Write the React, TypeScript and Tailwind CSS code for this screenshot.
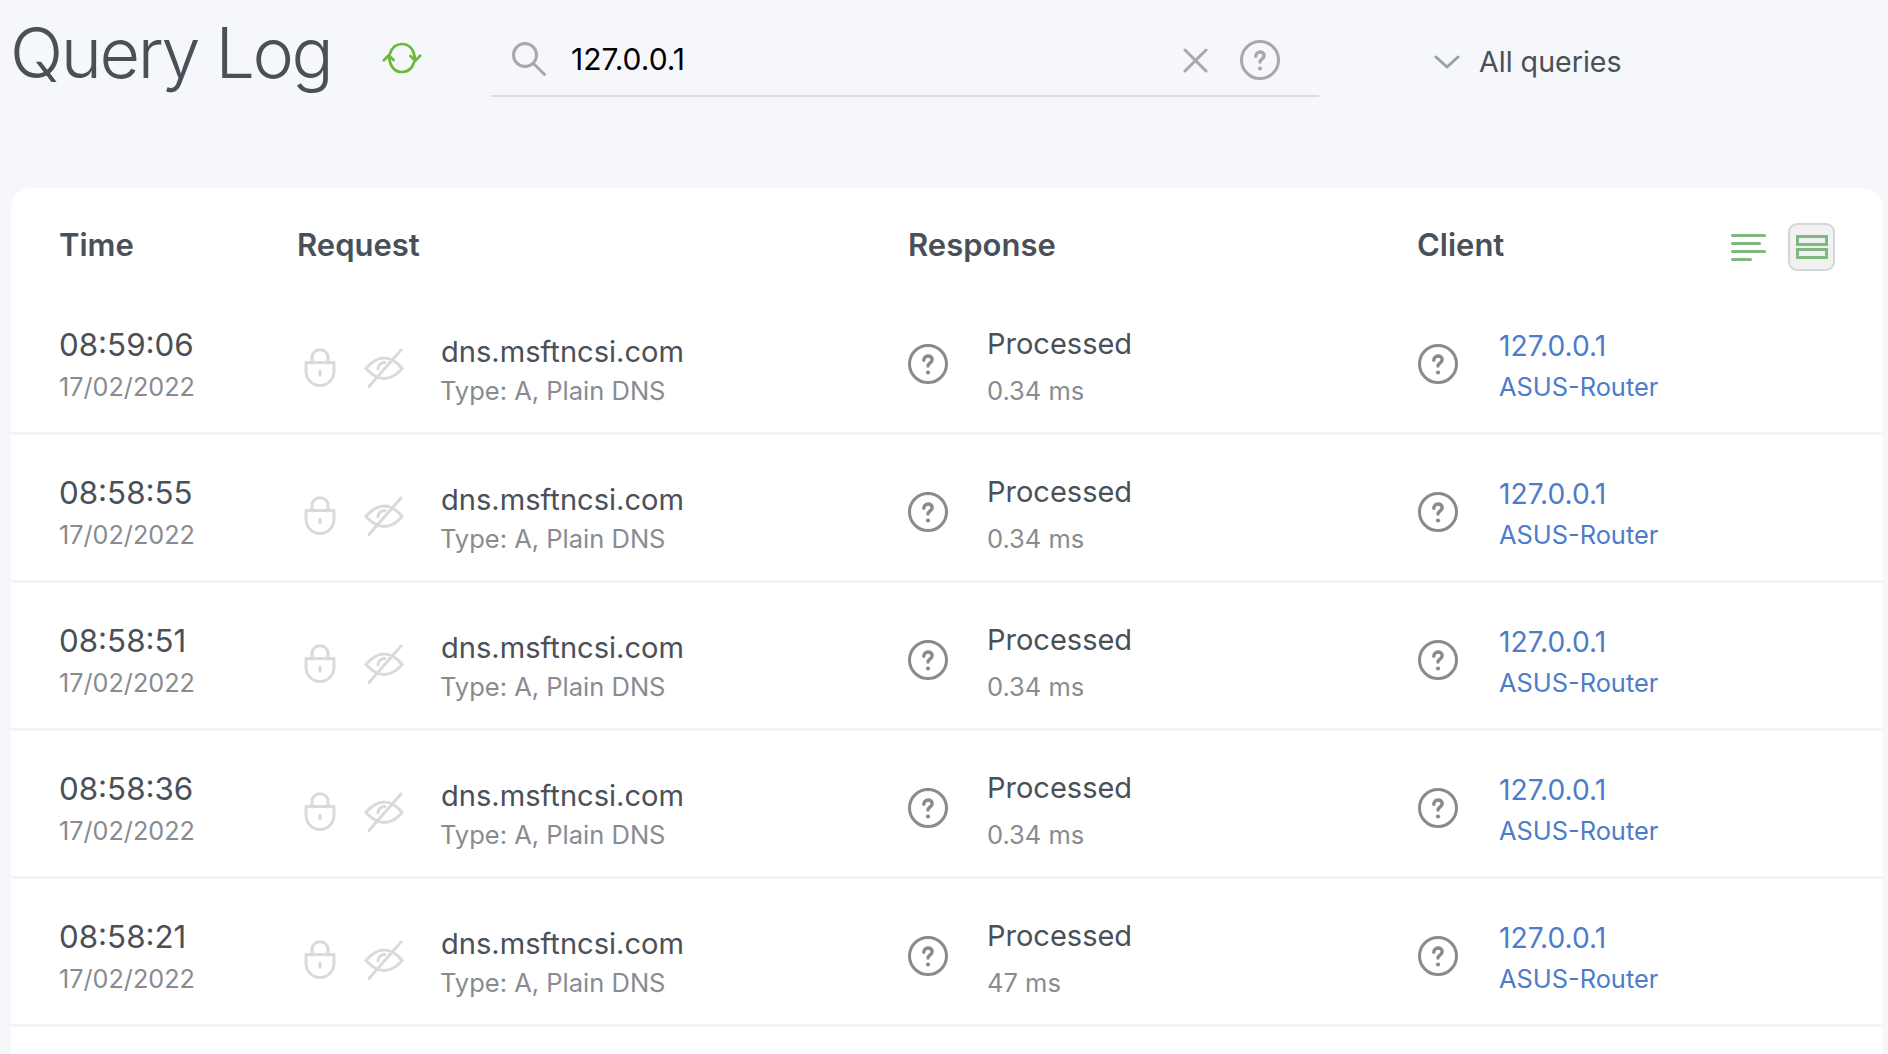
import React from "react";

const rows = [
  { time: "08:59:06", ms: "0.34 ms" },
  { time: "08:58:55", ms: "0.34 ms" },
  { time: "08:58:51", ms: "0.34 ms" },
  { time: "08:58:36", ms: "0.34 ms" },
  { time: "08:58:21", ms: "47 ms" },
];

function HelpIcon({ className }: { className?: string }) {
  return (
    <svg viewBox="0 0 40 40" fill="none" stroke="currentColor" strokeLinecap="round" strokeLinejoin="round" className={className}>
      <circle cx="20" cy="20" r="18.5" strokeWidth="3" />
      <path d="M15.800 16.200c0-2.500 1.900-4.200 4.300-4.200s4.100 1.500 4.100 3.700c0 3-4.200 3.200-4.200 6.300" strokeWidth="3.400" />
      <circle cx="20" cy="28.500" r="2.100" fill="currentColor" stroke="none" />
    </svg>
  );
}

function RefreshIcon() {
  return (
    <svg viewBox="0 0 40 32" fill="none" stroke="#6bb83a" strokeWidth="2.700" strokeLinecap="round" strokeLinejoin="round" className="w-[40px] h-[32px] shrink-0">
      <path d="M8 11.500C10 5.500 14.500 2 20 2c6.500 0 11.500 4.500 13 14.500" />
      <path d="M28.500 14l4.700 4.800 5-5" />
      <path d="M32 20.500C30 26.500 25.500 30 20 30c-6.500 0-11.500-4.500-13-14.500" />
      <path d="M11.500 18l-4.700-4.800-5 5" />
    </svg>
  );
}

function LockIcon() {
  return (
    <svg viewBox="0 0 32 39" fill="none" stroke="#dadada" strokeWidth="3" strokeLinecap="round" strokeLinejoin="round" className="w-[32px] h-[39px] shrink-0">
      <path d="M8 15V9.5C8 4.8 11.5 1.8 16 1.8s8 3 8 7.7V15" />
      <path d="M2 14.500h28V23c0 8-6 14.500-14 14.500S2 31 2 23z" />
      <path d="M16 23v4" />
    </svg>
  );
}

function EyeOffIcon() {
  return (
    <svg viewBox="0 0 40 40" fill="none" stroke="#dadada" strokeWidth="3" strokeLinecap="round" strokeLinejoin="round" className="w-[40px] h-[40px] shrink-0">
      <path d="M1.800 20.500C8 13.500 13.500 10 20 10c6.500 0 12.500 3.500 18.200 10.500C32.500 27 26.500 30.500 20 30.500c-6.500 0-12-3.500-18.200-10z" />
      <path d="M14 21a6.500 6.500 0 0 1 7-6.500" />
      <path d="M5 38.500L37 2" />
    </svg>
  );
}

function Row({ time, ms }: { time: string; ms: string }) {
  return (
    <div className="grid grid-cols-[237px_611px_509px_1fr] h-[148px] pl-[49px] border-b-[3px] border-[#f5f5f5]">
      <div className="pt-[37px] leading-[42px] -ml-[1px]">
        <div className="text-[31.300px] text-[#495057]">{time}</div>
        <div className="text-[25.200px] text-[#888c91]">17/02/2022</div>
      </div>
      <div className="flex">
        <div className="flex items-start gap-[28px] pl-[7px] pt-[61px] w-[144px]">
          <LockIcon />
          <EyeOffIcon />
        </div>
        <div className="pt-[45px] leading-[39px]">
          <div className="text-[29.100px] text-[#495057]">dns.msftncsi.com</div>
          <div className="text-[25.500px] text-[#888c91] -ml-[1px]">Type: A, Plain DNS</div>
        </div>
      </div>
      <div className="flex">
        <div className="w-[79px] pt-[57px]">
          <HelpIcon className="w-[40px] h-[40px] text-[#8a8a8a]" />
        </div>
        <div className="pt-[33px] leading-[48px]">
          <div className="text-[29px] text-[#495057]">Processed</div>
          <div className="text-[25.500px] text-[#888c91] -mt-[1px]">{ms}</div>
        </div>
      </div>
      <div className="flex">
        <div className="w-[82px] pl-[1px] pt-[57px]">
          <HelpIcon className="w-[40px] h-[40px] text-[#8a8a8a]" />
        </div>
        <div className="pt-[39px] leading-[41px] text-[#4d7cc9]">
          <div className="text-[28.200px]">127.0.0.1</div>
          <div className="text-[25.400px] -mt-[1px]">ASUS-Router</div>
        </div>
      </div>
    </div>
  );
}

export default function App() {
  return (
    <div className="h-[1054px] overflow-hidden bg-[#f5f7fb] font-['Inter',sans-serif]">
      <div className="flex h-[188px] items-start">
        <h1 className="ml-[10px] mt-[12px] text-[70px] leading-[82px] font-[350] tracking-[-2.400px] text-[#495057] w-[372px]">Query Log</h1>
        <div className="mt-[42px] w-[109px]">
          <RefreshIcon />
        </div>
        <div className="flex items-start w-[828px] h-[97px] border-b-2 border-[#dcdcdc] relative">
          <svg viewBox="0 0 34 34" fill="none" stroke="#a8a8a8" strokeWidth="3" strokeLinecap="round" className="w-[34px] h-[34px] ml-[21px] mt-[42px] shrink-0">
            <circle cx="13" cy="13" r="11.500" />
            <path d="M21.500 21.500L32.500 32.500" />
          </svg>
          <span className="ml-[25px] mt-[41px] w-[113px] text-[30px] leading-[36px] text-black">127.0.0.1</span>
          <svg viewBox="0 0 25 25" fill="none" stroke="#a8a8a8" strokeWidth="3" strokeLinecap="round" className="w-[25px] h-[25px] ml-[499px] mt-[48px] shrink-0">
            <path d="M2 2l21 21M23 2L2 23" />
          </svg>
          <HelpIcon className="w-[40px] h-[40px] ml-[32px] mt-[40px] text-[#a8a8a8] shrink-0" />
        </div>
        <div className="flex items-start ml-[115px]">
          <svg viewBox="0 0 26 14" fill="none" stroke="#9aa0ac" strokeWidth="3" strokeLinecap="round" strokeLinejoin="round" className="w-[26px] h-[14px] mt-[55px] shrink-0">
            <path d="M2 2l11 10L24 2" />
          </svg>
          <span className="ml-[19px] mt-[44px] text-[28.600px] leading-[36px] text-[#495057]">All queries</span>
        </div>
      </div>

      <div className="ml-[11px] w-[1872px] min-h-[900px] bg-white rounded-t-[20px]">
        <div className="grid grid-cols-[237px_611px_509px_1fr] h-[99px] pl-[49px] text-[31px] font-semibold leading-[36px] text-[#495057]">
          <div className="pt-[39px] -ml-[1px]">Time</div>
          <div className="pt-[39px]">Request</div>
          <div className="pt-[39px]">Response</div>
          <div className="pt-[39px] flex">
            <span>Client</span>
            <div className="flex items-start ml-auto mr-[48px] -mt-[4px]">
              <svg viewBox="0 0 35 27" fill="none" stroke="#7fb97f" strokeWidth="3" strokeLinecap="round" className="w-[35px] h-[27px] mt-[11px] shrink-0">
                <path d="M1.500 1.500h32M1.500 9.500h27M1.500 17.500h32M1.500 25.500h18" />
              </svg>
              <div className="ml-[22px] w-[47px] h-[48px] flex items-center justify-center rounded-[9px] border-2 border-[#d6d6d6] bg-[#f1f1f1]">
                <svg viewBox="0 0 32 24" fill="none" stroke="#7fb97f" strokeWidth="3" className="w-[32px] h-[24px]">
                  <rect x="1.500" y="1.500" width="29" height="8" />
                  <rect x="1.500" y="14.500" width="29" height="8" />
                </svg>
              </div>
            </div>
          </div>
        </div>
        {rows.map((r) => (
          <Row key={r.time} time={r.time} ms={r.ms} />
        ))}
      </div>
    </div>
  );
}
